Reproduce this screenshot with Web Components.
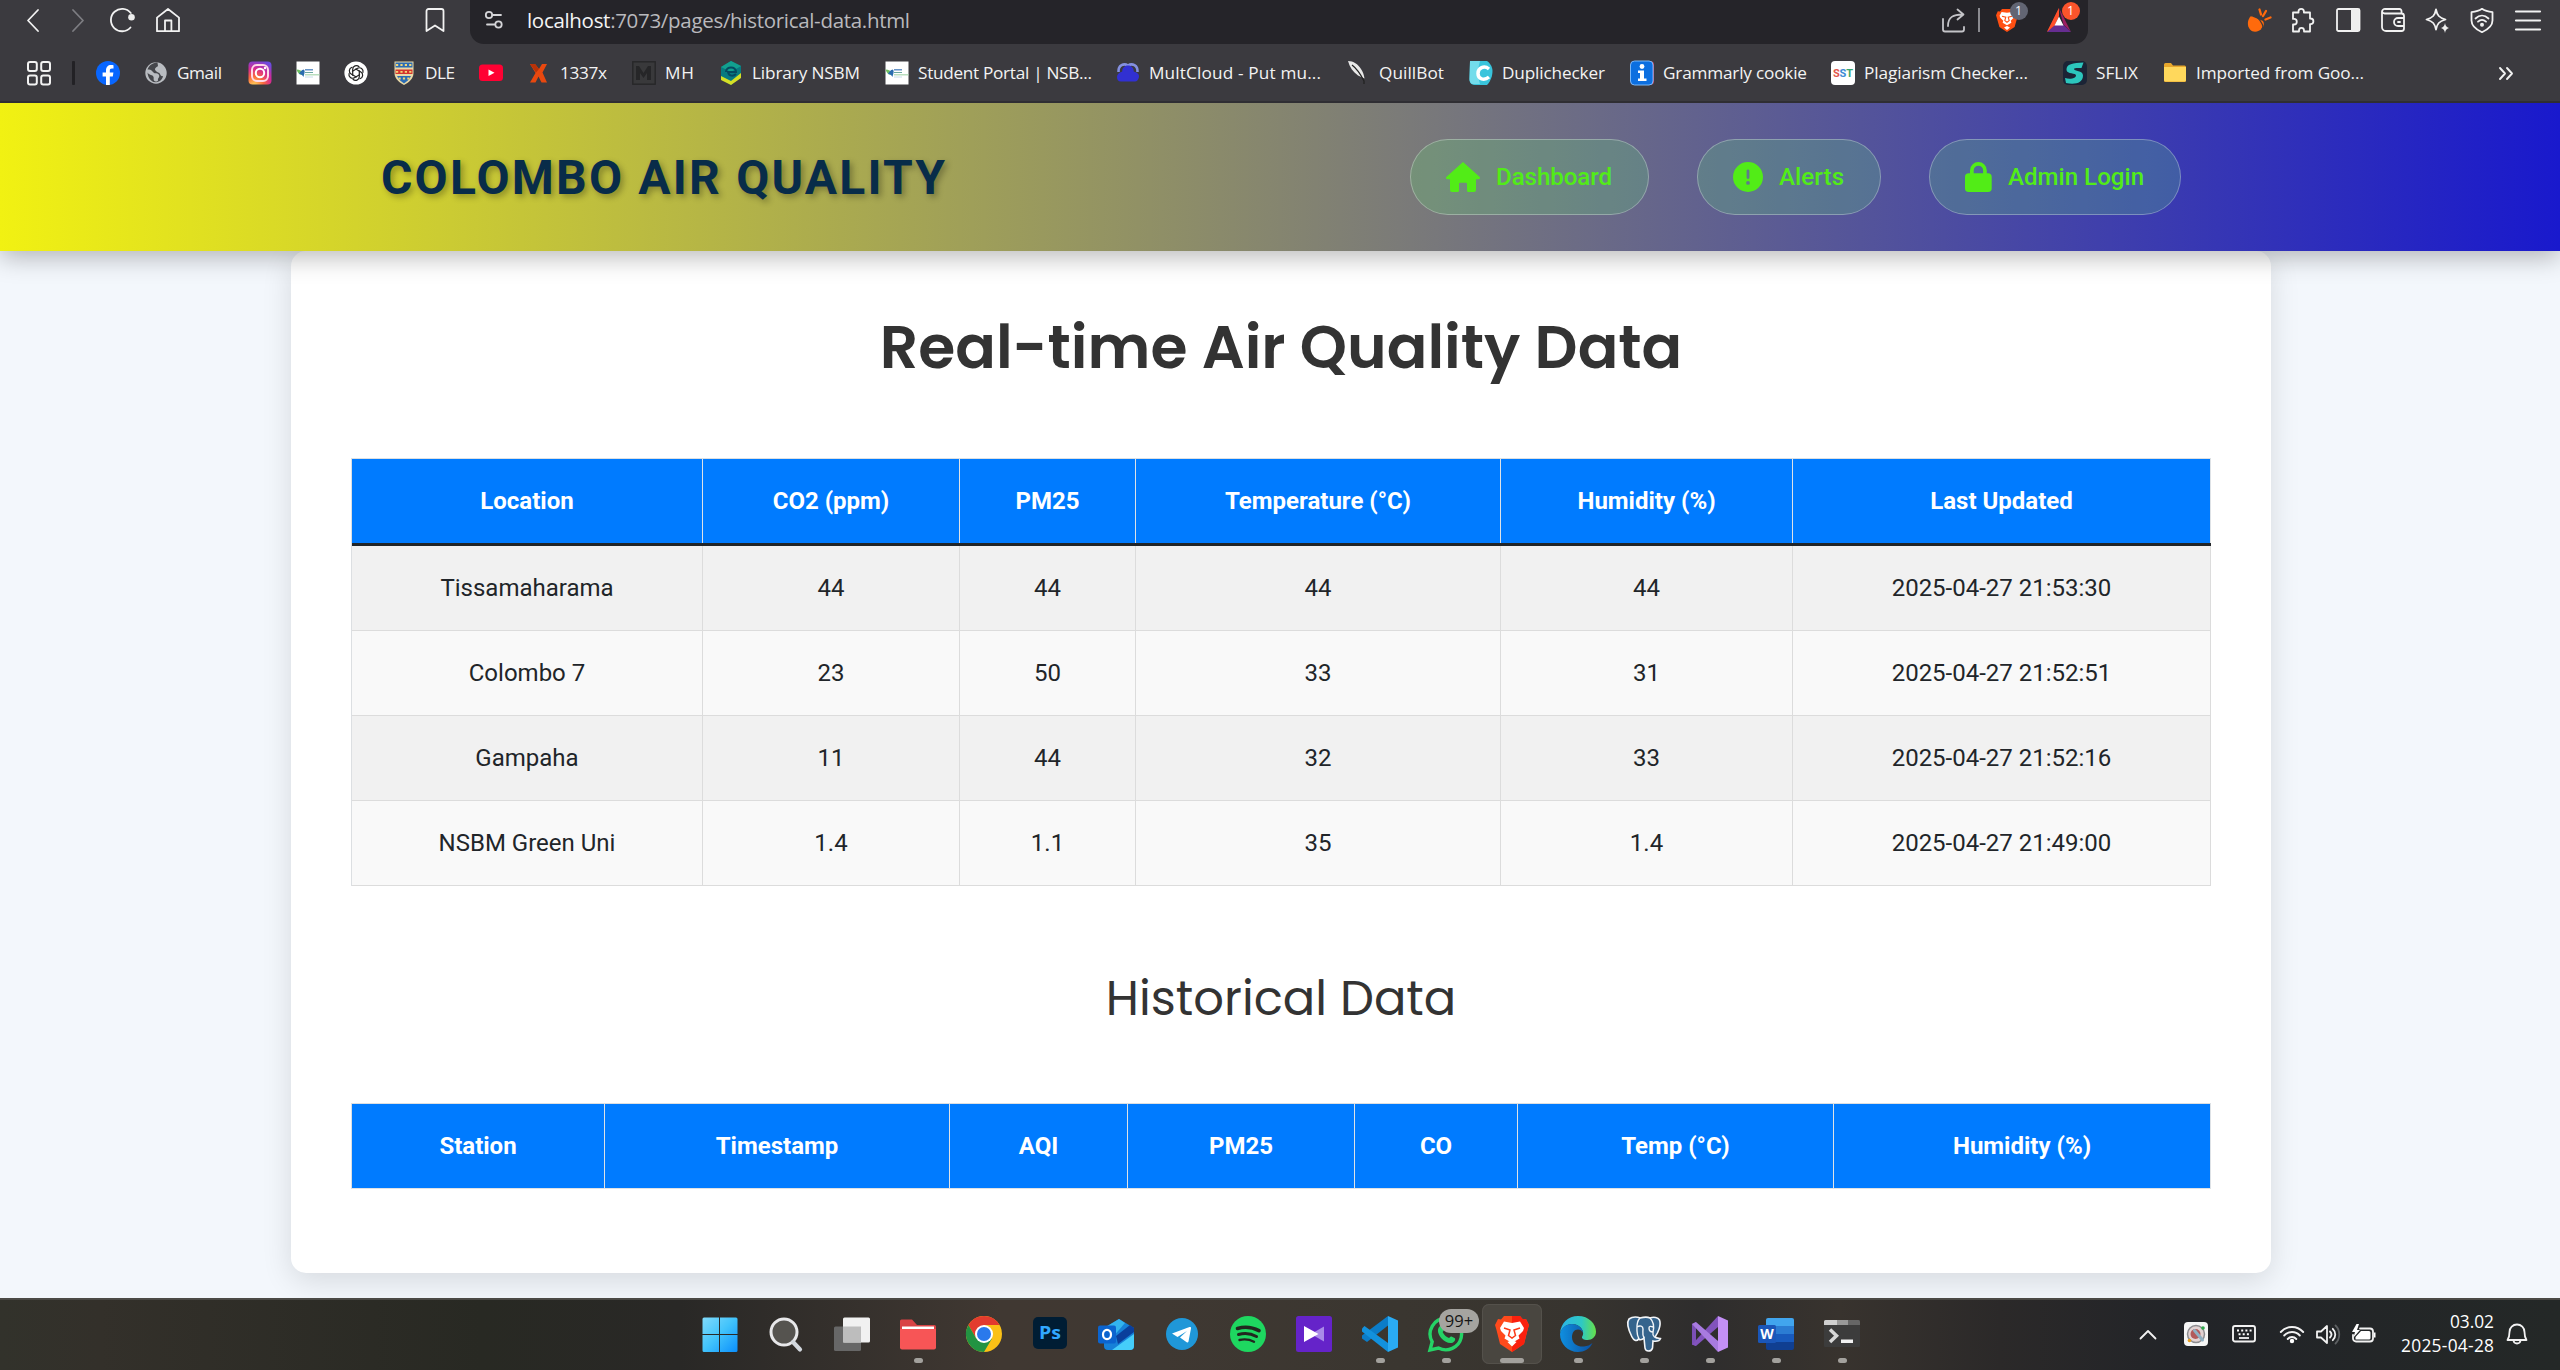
<!DOCTYPE html>
<html lang="en">
<head>
<meta charset="utf-8">
<title>Colombo Air Quality</title>
<style>
html,body{margin:0;height:100%}
body{width:2560px;height:1370px;overflow:hidden;background:#f4f7fc;font-family:Roboto,"Liberation Sans",sans-serif;color:#212529}
</style>
</head>
<body>
<desktop-screen></desktop-screen>
<script>
const petal = 'M8.700 14.200V8.300a3.700 3.700 0 0 1 6.300-2.600';
const ICONS = {
/* browser toolbar */
back:`<path d="M17 2 7 12.5 17 23" class="l"/>`,
forward:`<path d="M7 2 17 12.5 7 23" class="l" style="stroke:#7d7d82"/>`,
reload:`<path d="M20.500 19.500A11.200 11.200 0 1 1 20.800 5" class="l"/><circle cx="21.500" cy="9.300" r="3.300" fill="#eee"/>`,
home:`<path d="M1 23.2V9.6L12 1l11 8.600V23.200zM9 23V12.500h6.400V23" class="l"/>`,
bookmark:`<path d="M3.500 23V3A2 2 0 0 1 5.500 1h13A2 2 0 0 1 20.500 3V23L12 17.500z" class="l"/>`,
tune:`<g class="l" style="stroke:#d5d5d8"><circle cx="7" cy="7" r="3.200"/><path d="M10.500 7H19M5 16.500h7.500"/><circle cx="16.500" cy="16.500" r="3.200"/></g>`,
share:`<path d="M1 11v10.500a2 2 0 0 0 2 2h17a2 2 0 0 0 2-2V19M6 18C6 9 11 6.500 21 6.500M15.500 1.500l6 5-6 5" class="l" style="stroke:#c4c4c8"/>`,
brave:`<path d="M7 1h10l2 2.500 2.200-.3 1.800 4-1 3.300-2.400 8.500L12 24l-7.600-5L2 10.500 1 7.200l1.800-4 2.200.3z" fill="#ff4f12"/><path d="M12 4.800 17.400 4l2 3.800-.7 2-3 2.900.7 2L12 17.300l-4.400-2.600.7-2-3-2.900-.7-2L6.600 4zM12 18l3 1.500-3 2.500-3-2.500z" fill="#fff"/><path d="M7 8.200l3.800 1-1 3.400 2.200 1.600 2.200-1.600-1-3.400 3.800-1" fill="none" stroke="#ff4f12" stroke-width="1.100"/>`,
bat:`<path d="M12 0 0 24 7.500 16z" fill="#f1452b"/><path d="M12 0l4.500 16.500L24 24z" fill="#9e1f63"/><path d="M0 24 8 16.500h8L24 24z" fill="#662d91"/><path d="M12 0 0 24 8 17l4-9z" fill="#ff4f2a"/><path d="M12 8.500 7.500 17.500h9z" fill="#fff"/>`,
orange:`<path d="M4 8C0 12 0 18 3 21.500S12 24 15 20.500c2-2.500 2.500-5.500 1-7.500z" fill="#ff6a0c"/><path d="M4 8C6 6 10 8 13 12.500s4 7 1.500 8.500" fill="none" stroke="#3b3a3f" stroke-width="1.300"/><path d="M12.500 1.500l1.500 5M19 3l-3 5M23.500 9.500l-5 2" stroke="#ff6a0c" stroke-width="2.300" stroke-linecap="round"/>`,
puzzle:`<path d="M3 4.500h5.500V3.600a2.700 2.700 0 0 1 5.400 0v.9H20v6h.6a2.800 2.800 0 0 1 0 5.600H20V23.500h-6v-1.100a2.500 2.500 0 0 0-5 0v1.100H3V16.500h1a2.800 2.800 0 0 0 0-5.600H3z" class="l"/>`,
panel:`<rect x="1" y="1" width="22.500" height="22" rx="1.500" class="l"/><path d="M15 1h8v22h-8z" fill="#eee"/>`,
wallet:`<path d="M20.500 5.500V3a2 2 0 0 0-2-2H4.500A3 3 0 0 0 1 4v15a4 4 0 0 0 4 4h15.500a2.500 2.500 0 0 0 2.500-2.500V8a2.500 2.500 0 0 0-2.500-2.500H4A3 3 0 0 1 1 3.500M23 10h-6a4 4 0 0 0-4 4v0a4 4 0 0 0 4 4h6M17 14h2" class="l"/>`,
spark:`<path d="M11 1.500c1.200 6 3 8 9.500 10-6.500 2-8.300 4-9.500 10-1.200-6-3-8-9.500-10C8 9.500 9.800 7.500 11 1.500z" class="l"/><path d="M20 15c.6 3 1.400 4 4 5-2.600 1-3.400 2-4 5-.6-3-1.400-4-4-5 2.600-1 3.400-2 4-5z" fill="#eee"/>`,
vpn:`<path d="M12 .8c3 2.200 6.500 3 10.500 3.400v8.300c0 5-4.500 9-10.500 11.700C6 21.500 1.500 17.500 1.500 12.500V4.200C5.500 3.800 9 3 12 .8zM5.500 10.500c4-3.800 9-3.800 13 0M8 13.700c2.500-2.300 5.500-2.300 8 0" class="l"/><circle cx="12" cy="16.800" r="2" fill="#eee"/>`,
menu:`<path d="M0 3.500h24M0 12.500h24M0 21.500h24" class="l" style="stroke-width:2.200"/>`,
/* bookmarks */
apps:`<g class="l" style="stroke-width:2"><rect x="1" y="1" width="8.800" height="9" rx="2"/><rect x="14.200" y="1" width="8.800" height="9" rx="2"/><rect x="1" y="14.500" width="8.800" height="9" rx="2"/><rect x="14.200" y="14.500" width="8.800" height="9" rx="2"/></g>`,
facebook:`<circle cx="12" cy="12" r="12" fill="#0866ff"/><path d="M10 24V15.500H6.600V11.500H10V9.500C10 6 12 4 15 4c1.200 0 2.200.1 2.500.2v3.400H16c-1.700 0-2.200.9-2.200 2.200v1.700h3.600l-.6 4h-3V24z" fill="#fff"/>`,
globe:`<circle cx="12" cy="12" r="10.700" fill="#b9bcc1"/><path d="M13.500 1.500c-4 0-8 2-10 7 2 0 3.500 0 5.500 2.500s5 .5 6 3-1.500 3-1 5c.3 1.800-3 2-4 .5s.5-3-1-4.500-4-1-5.500-3.500C4 17 7 20 9.500 21l2.500.3c4-.5 6.500-3 7-6.300-1.500.5-2.500-.5-3-2s-3-1.500-4.500-3.500 1-3.500 2-4 0-2.500 0-4z" fill="#45464b"/>`,
instagram:`<defs><radialGradient id="ig" cx=".25" cy="1.050" r="1.150"><stop offset="0" stop-color="#ffd95c"/><stop offset=".35" stop-color="#fb6a3c"/><stop offset=".65" stop-color="#d62a92"/><stop offset="1" stop-color="#6a4be0"/></radialGradient></defs><rect x=".5" y=".5" width="23" height="23" rx="4" fill="url(#ig)"/><rect x="4" y="4" width="16" height="16" rx="5" fill="none" stroke="#ffd9e6" stroke-width="2"/><circle cx="12" cy="12" r="4.200" fill="none" stroke="#fff" stroke-width="2"/><circle cx="17" cy="7" r="1.200" fill="#fff"/>`,
nsbm:`<path d="M.5.5h23v23H.5z" fill="#fff"/><path d="M.5 8.500c3 0 5.500 1 7.500 4.500-3 2-6 0-7.500-4.500z" fill="#6fc062"/><path d="M3 13c2 0 3.500 1 4.500 3 1-4 2-6.500 0-7.500-2.500 1-3.500 2.500-4.500 4.500z" fill="#2a6cae"/><path d="M9 8.800h8" stroke="#4d82bf" stroke-width="1.300"/><path d="M9 11.500h8" stroke="#6aa8a0" stroke-width="1"/><path d="M9 13.800h14.500" stroke="#a9d6ae" stroke-width="1.200"/><path d="M9 16h8" stroke="#c8dbe8" stroke-width="1"/>`,
chatgpt:`<circle cx="12" cy="12" r="11.600" fill="#fff"/><g fill="none" stroke="#222" stroke-width="1.200" stroke-linecap="round">${[0,60,120,180,240,300].map(a => `<path d="${petal}" transform="rotate(${a} 12 12)"/>`).join('')}</g>`,
crest:`<path d="M2.500.5h19V12c0 6-5 9.500-9.500 12C7.500 21.500 2.500 18 2.500 12z" fill="#e9d9a8"/><path d="M3.500 1.500h17v5h-17z" fill="#2b6cb4"/><path d="M3.500 8.500h17V13h-17z" fill="#d4342d"/><path d="M5 15h14c-1.500 3.500-4.500 5.800-7 7.500-2.500-1.700-5.500-4-7-7.500z" fill="#2b6cb4"/><path d="M4 4h16M4 10.800h16M6.500 17.500h11" stroke="#f2d675" stroke-width="1.800" stroke-dasharray="2.200 2.200"/>`,
youtube:`<rect y="3.500" width="24" height="16.500" rx="3.500" fill="#ff0133"/><path d="M9.500 8.500v6.500l6-3.200z" fill="#fff"/>`,
x1337:`<path d="M3 3h5l4 5 3-5h5l-4.500 8.500L20 21.500h-5.500l-3-6-3 6H3l5.500-9.500z" fill="#e8480f"/><path d="M3 3h5l4 5-3 3.500z" fill="#b83208"/>`,
mh:`<rect x=".8" y=".8" width="22.400" height="22.400" fill="#39393b" stroke="#272729" stroke-width="1.400"/><path d="M4 19V5h3l4.500 7L16 5h3v14h-4v-7l-3.500 5L8 12v7z" fill="#262628"/>`,
library:`<path d="M12 0l10 5v10L12 24 2 18V6z" fill="#087a80"/><path d="M2 15l10 5 10-8v5L12 24 2 19z" fill="#d5df26"/><path d="M12 0l10 5-10 6L2 6z" fill="#12a08f"/><path d="M7 11c0-6 10-6 10 0H9c1 5 6 4 8 2" fill="none" stroke="#064a60" stroke-width="2"/>`,
multcloud:`<path d="M2.500 11C2 4 8 2 12 4.500 16 2 22 4 21.500 11" fill="none" stroke="#8490e0" stroke-width="2.600"/><path d="M12 4.500c3.500 0 5.800 2.500 5.800 6 4 1 5.700 3 5.200 5.500s-2 4.500-4 4.500H5c-3 0-4-2-4-4.500 0-2.500 1.700-4.500 5.200-5.500 0-3.500 2.300-6 5.800-6z" fill="#3130d2"/>`,
quill:`<path d="M2 0c5.500 0 10 3 13 8 2 3 3 6 3.500 9.500L12 14.500C7 11 3.500 6 2 0z" fill="#e8e8e8"/><path d="M6 4c4 3 8 8 12 16v3" fill="none" stroke="#222" stroke-width="1.300"/>`,
dupli:`<path d="M1 0h17c3 2 5.500 6 5.500 10S22 20 18 24H6C2 24 .5 21 .5 18z" fill="#39c4dc"/><path d="M1 0h10L8 12l3 11H6C2 24 .5 21 .5 18z" fill="#73dceb"/><path d="M20 8c-5-4-11-1-11 4.500S15 20 20 16" fill="none" stroke="#fff" stroke-width="3.500"/>`,
info:`<rect x=".5" width="23.500" height="24" rx="4" fill="#d7506b"/><rect x=".5" width="22.500" height="24" rx="4" fill="#0c6fe0" stroke="#79b7f7"/><circle cx="12" cy="5.500" r="2.400" fill="#fff"/><path d="M8 9.500h6v8h2.500V20H8v-2.500h2V12H8z" fill="#fff"/>`,
sst:`<rect width="24" height="24" rx="4" fill="#fff"/><text x="2" y="16" font-size="11" font-weight="700" font-family="Roboto,sans-serif" textLength="20" fill="#e2574c">S<tspan fill="#3d8bd4">S</tspan><tspan fill="#3aa76d">T</tspan></text>`,
sflix:`<rect width="24" height="24" rx="5" fill="#1b2436"/><path d="M20.500 1.500C10 2 3 3 3.500 9c.5 4.500 9.500 2.500 9.500 5.500s-6 4-11 2.500l1 5c9 2 17 0 17-7.500 0-5.500-9-4-9-6.500 0-1.500 5-1 7.500-1z" fill="#2cc6bd"/>`,
folder:`<path d="M1 3.500A1.500 1.500 0 0 1 2.500 2H8l2 2.500h11.500A1.500 1.500 0 0 1 23 6v13.500a1.500 1.500 0 0 1-1.500 1.500h-19A1.500 1.500 0 0 1 1 19.500z" fill="#e8a72c"/><path d="M1 6h22v13a1.500 1.500 0 0 1-1.500 1.500h-19A1.500 1.500 0 0 1 1 19z" fill="#ffd85c"/>`,
more:`<path d="M4 7l5 5.500-5 5.500M11 7l5 5.500-5 5.500" class="l" style="stroke-width:1.900"/>`,
/* navigation pills, 30px tall */
house:`<path d="M17 0 0 15.200c-.3 1.300.5 2 1.500 2H4V28a2 2 0 0 0 2 2h5.500a1.500 1.500 0 0 0 1.500-1.500V22a1.200 1.200 0 0 1 1.200-1.200h5.600A1.200 1.200 0 0 1 21 22v6.500a1.500 1.500 0 0 0 1.500 1.500H28a2 2 0 0 0 2-2V17.200h2.500c1 0 1.800-.7 1.500-2z" fill="#52ec17"/>`,
alert:`<path d="M15 0a15 15 0 1 0 0 30 15 15 0 0 0 0-30zm0 7.500c.8 0 1.400.6 1.400 1.400v6.600a1.400 1.400 0 0 1-2.800 0V8.900c0-.8.600-1.400 1.400-1.400zm0 11.500a1.900 1.900 0 1 1 0 3.800 1.900 1.900 0 0 1 0-3.800z" fill="#52ec17"/>`,
lock:`<path d="M5 11.200V8.400a8.400 8.400 0 0 1 16.800 0v2.800H23a3.700 3.700 0 0 1 3.700 3.700v11.300A3.700 3.700 0 0 1 23 30H3.700A3.700 3.700 0 0 1 0 26.200V14.900a3.700 3.700 0 0 1 3.700-3.700zm3.700 0h9.400V8.400a4.700 4.700 0 0 0-9.400 0z" fill="#52ec17"/>`,
/* taskbar, 36 grid */
windows:`<defs><linearGradient id="w" x1="0" y1="0" x2="36" y2="36" gradientUnits="userSpaceOnUse"><stop offset="0" stop-color="#84dcfb"/><stop offset=".5" stop-color="#41c3fb"/><stop offset="1" stop-color="#0a8efc"/></linearGradient></defs><path d="M.5 3A1.500 1.500 0 0 1 2 1.500h15V18H.500zM18 1.500h16A1.500 1.500 0 0 1 35.500 3v15H18zM.500 19H17v17H2A1.500 1.500 0 0 1 .500 34.500zM18 19h17.500v15.500A1.500 1.500 0 0 1 34 36H18z" fill="url(#w)"/>`,
search:`<circle cx="16" cy="16" r="13" fill="#55534f" stroke="#e8e8ea" stroke-width="3"/><path d="M25 26l7 7.500" stroke="#d3d8de" stroke-width="4.200" stroke-linecap="round"/>`,
taskview:`<rect x="0" y="10.500" width="27" height="24.500" rx="1.500" fill="#676767"/><rect x="9" y="1.500" width="27" height="25" rx="1.500" fill="#f1f1f1"/><path d="M9 10.500h18v16H9z" fill="#bdbdbd"/>`,
explorer:`<path d="M0 5a1.500 1.500 0 0 1 1.500-1.500H12L17 9h17.500A1.500 1.500 0 0 1 36 10.500V20H0z" fill="#d94345"/><path d="M2 10.500h32v6H2z" fill="#fff"/><path d="M0 13h36v18.500a2 2 0 0 1-2 2H2a2 2 0 0 1-2-2z" fill="#f75556"/>`,
chrome:`<circle cx="18" cy="18" r="18" fill="#fbc116"/><path d="M18 9h15.600A18 18 0 0 0 2.400 9L10 22z" fill="#e33b2e"/><path d="M2.400 9a18 18 0 0 0 15.600 27l8-13.500-8 3.500-8-4z" fill="#229342"/><circle cx="18" cy="18" r="9" fill="#fff"/><circle cx="18" cy="18" r="7" fill="#2a79ec"/>`,
photoshop:`<rect x="1" y="1" width="34" height="32" rx="5" fill="#001d34"/><text x="18" y="23" text-anchor="middle" font-size="18.500" font-weight="700" font-family="Open Sans,sans-serif" textLength="22" lengthAdjust="spacingAndGlyphs" fill="#31a8ff">Ps</text>`,
outlook:`<path d="M6 12 21 3l15 9v18a4 4 0 0 1-4 4H10a4 4 0 0 1-4-4z" fill="#1681d8"/><path d="M6 12 21 3l6 4L14 22z" fill="#33b4ee"/><path d="M18 20 32 9l4 3v4L20 28z" fill="#0a3f9c"/><path d="M14 34l22-16v12a4 4 0 0 1-4 4z" fill="#45cdfa"/><rect y="9.500" width="18" height="18" rx="2" fill="#0b64cf"/><ellipse cx="9" cy="18.500" rx="4" ry="4.700" fill="none" stroke="#fff" stroke-width="2.200"/>`,
telegram:`<circle cx="18" cy="18" r="16" fill="#1f97d8"/><path d="M8 17.500 25.500 11c1.200-.3 1.700.2 1.500 1.500l-2.500 13c-.3 1-1 1.200-1.800.7L16 21.500 23 15l-9.500 6z" fill="#fff"/>`,
spotify:`<circle cx="18" cy="18" r="18" fill="#1ed760"/><g fill="none" stroke="#22271f" stroke-linecap="round"><path d="M7.500 12.500c7-2 15-1.200 21.500 2.200" stroke-width="3.600"/><path d="M8.500 18.500c6-1.600 12.500-1 18 2" stroke-width="3"/><path d="M9.500 24c5-1.200 10-.6 14.500 1.700" stroke-width="2.400"/></g>`,
visualplayer:`<rect width="36" height="36" rx="2.500" fill="#6523c9"/><path d="M28 10.500v15L15 18z" fill="#a98ae8"/><path d="M8 10l14.500 8L8 26z" fill="#fff"/>`,
vscode:`<path d="M26 0v9.500L5 26 0 22.500v-3z" fill="#0b7cc8"/><path d="M2.500 10 26 27v9L0 15.500v-3z" fill="#1291dd"/><path d="M26 0l10 4.500v27L26 36z" fill="#2aabf3"/>`,
whatsapp:`<path d="M18 2.200A15.800 15.800 0 1 1 10.500 32L2 34l2.200-8.200A15.800 15.800 0 0 1 18 2.200z" fill="none" stroke="#25d366" stroke-width="3.400"/><path d="M12 10c1-.8 2.500-.5 3 .8l1 2.800c.2 1-.8 1.800-1.400 2.500 1.500 3 3.400 4.800 6.400 6 .8-.8 1.400-2 2.500-1.600l3 1.400c1 .6.8 2 .1 3-3.500 4.500-9.500 1-12.500-2s-6.500-9-2.100-12.900z" fill="#25d366"/>`,
bravebig:`<path d="M10 0h16l3 3.500L32 3l3 6-1.500 5L30 28l-12 8L6 28 2.500 14 1 9l3-6 3 .5z" fill="#ff4a1c"/><path d="M18 0h8l3 3.500L32 3l3 6-1.500 5L30 28l-12 8z" fill="#fa200e"/><path d="M18 7l8-1.500 4 6.500-1 3-4.500 4.500 1 3L18 27l-7.500-4.500 1-3L7 15l-1-3 4-6.500zM18 24l4.500 2L18 30.500 13.500 26z" fill="#fff"/><path d="M10 12l6 2-1.500 5.500L18 22l3.500-2.500L20 14l6-2" fill="none" stroke="#fb3a18" stroke-width="1.500"/>`,
edge:`<defs><linearGradient id="e1" x1="0" x2="1"><stop offset="0" stop-color="#2bb4e8"/><stop offset=".6" stop-color="#2ec8c4"/><stop offset="1" stop-color="#66e04a"/></linearGradient><linearGradient id="e2" x1="0" x2="1"><stop offset="0" stop-color="#0f8fe0"/><stop offset="1" stop-color="#0c4fa0"/></linearGradient></defs><path d="M0 17C1 7 8 0 18 0c11 0 18 8 18 15.500C36 21 32 24 27.500 24c-4 0-6-1.500-5.500-3s1.500-2 1-5C22 11 17 8 12 8 6 8 2 12 0 17z" fill="url(#e1)"/><path d="M0 18C1 12 6 8 12 8c6 0 11 4 11 9-1-2.500-3-3.500-5-3.500-4 0-6 3.500-6 7.500 0 7 6 10 12 9.500 3.500-.3 6-1.500 8.500-3.500C30 33 24 36 18 36 8 36 0 28 0 18z" fill="url(#e2)"/>`,
postgres:`<path d="M3 3c4-3 9-2 11-1 4-1 8-1 10 0 4-1.500 8-.5 9.500 2 2 5-1.500 13-4.500 17 2 1.500 4 1 5.500 1.500-1 2.500-4.500 3-7.500 2.500l-.5 7c-1 4-7 4-7.500 0L18 22c-2 2-4 2-5.500 1-2 3-5 1-6.500-2C2.500 14 0 7 3 3z" fill="#35648d" stroke="#f2f5f8" stroke-width="1.600"/><path d="M14 2c-4 4-3 9-3 13 0 3 1 6 2 8M24 2c5 5 4 10 3 14-.5 2 0 3.500 1.500 5M11 11c3-2 6-1 6 2s-1 5 1 9M27 11c-2-1-4-1-4 1s1 4 4 4" fill="none" stroke="#f2f5f8" stroke-width="1.400"/>`,
visualstudio:`<path d="M0 8l4-2v24l-4-1.500z" fill="#7b4fb5"/><path d="M0 28.500l4 1.500L26 11V0z" fill="#8253bd"/><path d="M0 8l4-2 22 19v11z" fill="#a87be0"/><path d="M26 0l10 4.500v27L26 36z" fill="#c490f5"/>`,
word:`<path d="M8 4a2 2 0 0 1 2-2h24a2 2 0 0 1 2 2v6H8z" fill="#41a5ee"/><path d="M8 10h28v8H8z" fill="#2b7cd3"/><path d="M8 18h28v8H8z" fill="#185abd"/><path d="M8 26h28v6a2 2 0 0 1-2 2H10a2 2 0 0 1-2-2z" fill="#103f91"/><rect y="9" width="18" height="18" rx="1.500" fill="#1a56b8"/><text x="9" y="23" text-anchor="middle" font-size="14" font-weight="700" font-family="Open Sans,sans-serif" fill="#fff">W</text>`,
terminal:`<rect y="4" width="36" height="27" rx="1.500" fill="#3c3c3c"/><path d="M0 5.500A1.500 1.500 0 0 1 1.500 4H13v5H0z" fill="#cfcfcf"/><path d="M13 4h11v5H13z" fill="#999"/><path d="M24 4h10.500A1.500 1.500 0 0 1 36 5.500V9H24z" fill="#666"/><path d="M6 13.500l6.500 6.300L6 26" fill="none" stroke="#d8d8d8" stroke-width="3.500"/><path d="M17 23.500h12v3.500H17z" fill="#f2f2f2"/>`,
/* tray */
chevup:`<path d="M4.500 16.500 12 9l7.500 7.500" class="l"/>`,
trayapp:`<rect width="24" height="24" rx="4" fill="#f6f6f6"/><circle cx="12" cy="12" r="8.500" fill="#e3d3d3" stroke="#8d8d90" stroke-width="1.500"/><circle cx="11.500" cy="12" r="5" fill="#b25a5a"/><path d="M10.500 8.500l2.500 3 5.500 6.500" stroke="#8fb0c2" stroke-width="3" stroke-linecap="round"/><circle cx="19" cy="6" r="1.800" fill="#2ea84a"/><circle cx="5.500" cy="18.500" r="1.800" fill="#e8a020"/>`,
keyboard:`<rect x="1" y="4" width="22" height="15.500" rx="2" class="l" style="stroke-width:1.900"/><path d="M5 8.500h15M6.500 12.200h12" stroke="#fff" stroke-width="2" stroke-dasharray="2 2.200"/><path d="M7 16h10" stroke="#fff" stroke-width="1.700"/>`,
wifi:`<path d="M.8 10C7 3.300 17 3.300 23.200 10M4.200 13.500c4.300-4.600 11.300-4.600 15.600 0M7.700 17c2.400-2.600 6.200-2.600 8.600 0" class="l" style="stroke-width:1.900"/><circle cx="12" cy="19" r="2.200" fill="#fff"/>`,
volume:`<path d="M1 9.500h4L11 4v17l-6-5.500H1z" class="l"/><path d="M14 9.500c1.800 1.800 1.800 4.200 0 6M16.800 6.800c3.300 3.300 3.300 8.100 0 11.400" class="l"/><path d="M19.500 3.500c5 5 5 13 0 18" class="l" style="stroke:#5d6062"/>`,
battery:`<path d="M8 6.500h10a3 3 0 0 1 3 3v7a3 3 0 0 1-3 3H4a3 3 0 0 1-3-3V13" class="l" style="stroke-width:1.800"/><path d="M9 9h8a1.500 1.500 0 0 1 1.500 1.500V16a1.500 1.500 0 0 1-1.500 1.500H3.500V15zM22 10.500h1.500v5H22zM4.500 2 0 10h3L1.500 15.500 8 8H5l2-6z" fill="#fff"/>`,
bell:`<path d="M2.500 18c2-3 2-5 2-8a7.500 7.500 0 0 1 15 0c0 3 0 5 2 8zM8.500 18.500c.5 4 6.500 4 7 0" class="l"/>`
};

const define = (name, html, ready) => {
  const tpl = document.createElement('template');
  customElements.define(name, class extends HTMLElement {
    connectedCallback() {
      if (this.shadowRoot) return;
      const root = this.attachShadow({mode: 'open'});
      tpl.innerHTML = typeof html === 'function' ? html(this) : html;
      root.append(tpl.content.cloneNode(true));
      if (ready) ready(this, root);
    }
  });
};

/* SVG glyph; width/height in px, view box from the "grid" attribute */
define('ui-icon', el => {
  const w = el.getAttribute('w') || 24, h = el.getAttribute('h') || w, grid = el.getAttribute('grid') || '0 0 24 24';
  return `<style>:host{display:block;flex:none;width:${w}px;height:${h}px}svg{display:block;overflow:visible}.l,.l *{fill:none;stroke-linejoin:round;stroke-linecap:round}.l{stroke:#f2f2f2;stroke-width:1.8}</style><svg width="${w}" height="${h}" viewBox="${grid}">${ICONS[el.getAttribute('name')] || ''}</svg>`;
});

/* One line of text, tracked so that it spans its "w" attribute */
define('fit-text', el => `<style>:host{display:block;flex:none;width:${el.getAttribute('w')}px;white-space:nowrap}</style><span><slot></slot></span>`,
  (el, root) => {
    const span = root.querySelector('span'), n = el.textContent.trim().length;
    const natural = span.getBoundingClientRect().width;
    span.style.letterSpacing = ((+el.getAttribute('w') - natural) / Math.max(1, n - 1)).toFixed(3) + 'px';
  });

define('count-badge', el => `<style>:host{position:absolute;left:15px;top:-6px;width:18px;height:18px;border-radius:9px;background:${el.getAttribute('bg')};color:#fff;font:12.500px/18px "Open Sans",sans-serif;text-align:center}</style><slot></slot>`);

define('tool-bar', () => {
  const ic = (name, ml, w = 24) => `<ui-icon name="${name}" w="${w}" h="24" style="margin-left:${ml}px"></ui-icon>`;
  return `<style>
  :host{display:flex;height:44px;background:#3b3a3f}
  .side{display:flex;align-items:center;padding-bottom:4px;box-sizing:border-box;height:44px}
  .left{width:470px;flex:none}
  .omni{width:1618px;flex:none;background:#252429;border-radius:0 0 14px 14px;padding-left:12px}
  fit-text{font:20.500px/28px "Open Sans","Noto Sans",sans-serif;color:#b9b9bd;margin:0 0 0 21px}
  b{font-weight:400;color:#f4f4f5}
  .rule{width:1.500px;height:24px;background:#8b8b90;margin-left:12px}
  .wrap{position:relative}
  </style>
  <div class="side left">${ic('back',21)}${ic('forward',21)}${ic('reload',20)}${ic('home',22)}${ic('bookmark',243)}</div>
  <div class="side omni">${ic('tune',0)}<fit-text w="383"><b>localhost</b>:7073/pages/historical-data.html</fit-text>
  ${ic('share',1032)}<div class="rule"></div>
  <div class="wrap" style="margin-left:15px">${ic('brave',0)}<count-badge bg="#626573">1</count-badge></div>
  <div class="wrap" style="margin-left:28px">${ic('bat',0)}<count-badge bg="#fb542b">1</count-badge></div></div>
  <div class="side">${ic('orange',159)}${ic('puzzle',19)}${ic('panel',22)}${ic('wallet',21)}${ic('spark',20)}${ic('vpn',21)}${ic('menu',22)}</div>`;
});

define('book-mark', el => `<style>:host{display:flex;flex:none;align-items:center;gap:9px;height:24px}::slotted(fit-text){font:17.200px/24px "Open Sans","Noto Sans",sans-serif;color:#f3f3f3}</style><ui-icon name="${el.getAttribute('icon')}"></ui-icon><slot></slot>`);

define('bookmark-bar', () => {
  const items = [['facebook'],['globe','Gmail',45,2],['instagram'],['nsbm'],['chatgpt'],['crest','DLE',30],['youtube'],['x1337','1337x',47,1],['mh','MH',29,1],['library','Library NSBM',108,1],['nsbm','Student Portal | NSB...',174],['multcloud','MultCloud - Put mu...',172,1],['quill','QuillBot',65,1],['dupli','Duplichecker',103,1],['info','Grammarly cookie',144],['sst','Plagiarism Checker...',164,11],['sflix','SFLIX',42,1],['folder','Imported from Goo...',168]];
  return `<style>:host{display:flex;align-items:center;gap:24px;height:57px;box-sizing:border-box;padding:0 0 0 27px;background:#3b3a3f}.rule{width:3px;height:24px;border-radius:1px;background:#222125;margin:0 -3px}</style>
  <ui-icon name="apps"></ui-icon><div class="rule"></div>` + items.map(([i, t, w, pad]) =>
  `<book-mark icon="${i}"${pad ? ` style="margin-right:${pad}px"` : ''}>${t ? `<fit-text w="${w}">${t}</fit-text>` : ''}</book-mark>`).join('') +
  `<ui-icon name="more" style="margin-left:108px"></ui-icon>`;
});

define('nav-pill', el => `<style>:host{display:flex;align-items:center;box-sizing:border-box;width:${el.getAttribute('w')}px;height:76px;padding-left:35px;border:1px solid rgba(255,255,255,.3);border-radius:38px;background:rgba(98,238,122,.2)}
  ::slotted(fit-text){font:500 24px/36px Roboto,sans-serif;color:#52ec17}</style>
  <ui-icon name="${el.getAttribute('icon')}" w="${el.getAttribute('iw')}" h="30" grid="0 0 ${el.getAttribute('iw')} 30" style="margin-right:16px"></ui-icon><slot></slot>`);

define('site-header', `<style>
  :host{display:flex;align-items:center;justify-content:space-between;box-sizing:border-box;height:148px;padding:0 379px 0 381px;background:linear-gradient(90deg,#f1f112,#1919cd);box-shadow:0 6px 24px rgba(0,0,0,.28);position:relative;z-index:1}
  h1{margin:2px 0 0;font:700 48px/58px Roboto,sans-serif;color:#082c49;text-shadow:3px 3px 6px rgba(0,0,0,.3)}
  nav{display:flex;gap:48px}
  </style>
  <h1><fit-text w="564">COLOMBO AIR QUALITY</fit-text></h1>
  <nav><nav-pill w="239" icon="house" iw="34"><fit-text w="116">Dashboard</fit-text></nav-pill>
  <nav-pill w="184" icon="alert" iw="30"><fit-text w="65">Alerts</fit-text></nav-pill>
  <nav-pill w="252" icon="lock" iw="27"><fit-text w="136">Admin Login</fit-text></nav-pill></nav>`);

/* Grid table: columns, head and rows come from the element's attributes */
customElements.define('data-table', class extends HTMLElement {
  connectedCallback() {
    const cols = this.getAttribute('cols').split(' ').map(c => c + 'px').join(' ');
    const head = this.getAttribute('head').split('|');
    const rows = (this.getAttribute('rows') || '').split(';').filter(Boolean).map(r => r.split('|'));
    this.attachShadow({mode: 'open'}).innerHTML = `<style>
    :host{display:block;box-sizing:border-box;border:solid #dcdfe2;border-width:1px 0 0 1px;font:24px/36px Roboto,sans-serif;color:#212529;text-align:center}
    .row{display:grid;grid-template-columns:${cols}}
    .row>div{box-sizing:border-box;height:85px;padding-top:24px;border:solid #dcdcdc;border-width:0 1px 1px 0;background:#f9f9f9}
    .row.odd>div{background:#f1f1f1}
    .row.head>div{background:#007bff;color:#fff;font-weight:700;border-color:#dee2e6}
    .row.rule>div{height:87px;border-bottom:none}
    .row.rule{height:84px;overflow:hidden;border-bottom:3px solid #212529}
    </style><div class="row head ${rows.length ? 'rule' : ''}">${head.map(h => `<div>${h}</div>`).join('')}</div>` +
    rows.map((r, i) => `<div class="row ${i % 2 ? '' : 'odd'}">${r.map(c => `<div>${c}</div>`).join('')}</div>`).join('');
  }
});

define('data-card', `<style>
  :host{display:flex;flex-direction:column;align-items:center;box-sizing:border-box;width:1980px;height:1022px;margin:0 289px 0 291px;padding:54px 60px 0;background:#fff;border-radius:15px;box-shadow:0 8px 30px rgba(0,0,0,.12)}
  h2,h3{margin:0;color:#333;font-family:Poppins,Inter,sans-serif;white-space:nowrap}
  h2{font-weight:600;font-size:60px;line-height:84px}
  h3{font-weight:400;font-size:48px;line-height:70px}
  data-table{width:1860px}
  </style>
  <h2>Real-time Air Quality Data</h2>
  <data-table style="margin-top:69px" cols="351 257 176 365 292 418" head="Location|CO2 (ppm)|PM25|Temperature (°C)|Humidity (%)|Last Updated" rows="Tissamaharama|44|44|44|44|2025-04-27 21:53:30;Colombo 7|23|50|33|31|2025-04-27 21:52:51;Gampaha|11|44|32|33|2025-04-27 21:52:16;NSBM Green Uni|1.4|1.1|35|1.4|2025-04-27 21:49:00"></data-table>
  <h3 style="margin-top:78px">Historical Data</h3>
  <data-table style="margin-top:69px" cols="253 345 178 227 163 316 377" head="Station|Timestamp|AQI|PM25|CO|Temp (°C)|Humidity (%)"></data-table>`);

define('task-app', el => {
  const run = el.getAttribute('run');
  return `<style>:host{display:flex;flex-direction:column;align-items:center;flex:none;box-sizing:border-box;width:60px;height:60px;padding-top:12px;border-radius:7px;position:relative}
  :host([active]){background:#494640;box-shadow:inset 0 0 0 1px #54514b}
  i{width:${run}px;height:5px;margin-top:6px;border-radius:3px;background:#a3a19d}
  ::slotted(b){position:absolute;left:23px;top:5px;width:40px;height:24px;border-radius:12px;background:#a5a4a0;color:#161616;font:400 16.500px/24px "Open Sans",sans-serif;text-align:center}</style>
  <ui-icon name="${el.getAttribute('icon')}" w="36" grid="0 0 36 36"></ui-icon>${run ? '<i></i>' : ''}<slot></slot>`;
});

define('task-bar', () => {
  const apps = [['windows'],['search'],['taskview'],['explorer',9],['chrome'],['photoshop'],['outlook'],['telegram'],['spotify'],['visualplayer'],['vscode',9],['whatsapp',9,'<b>99+</b>'],['bravebig',24,'',1],['edge',9],['postgres',9],['visualstudio',9],['word',9],['terminal',9]];
  return `<style>
  :host{display:flex;justify-content:space-between;box-sizing:border-box;height:72px;border-top:2px solid #4b4a46;background:linear-gradient(90deg,#32322b 0,#33302a 100px,#282923 480px,#292826 680px,#403832 1000px,#3f3832 1160px,#3a3630 1400px,#37342f 1580px,#2e2d2d 1700px,#38332e 1840px,#2b2929 2000px,#222428 2180px,#242827 2560px)}
  .apps{display:flex;gap:6px;padding:4px 0 0 690px;flex:none}
  .tray{display:flex;align-items:flex-start;padding:22px 31px 0 0;gap:24px}
  .clock{font:17.300px/24px "Open Sans","Noto Sans",sans-serif;color:#fff;display:flex;flex-direction:column;align-items:flex-end;margin:-12px -1px 0 1px}
  </style><div class="apps">${apps.map(([n, r, b, a]) => `<task-app icon="${n}"${r ? ` run="${r}"` : ''}${a ? ' active' : ''}>${b || ''}</task-app>`).join('')}</div>
  <div class="tray"><ui-icon name="chevup"></ui-icon><ui-icon name="trayapp"></ui-icon><ui-icon name="keyboard"></ui-icon><ui-icon name="wifi"></ui-icon>
  <ui-icon name="volume" style="margin-left:-12px"></ui-icon><ui-icon name="battery" style="margin-left:-12px"></ui-icon>
  <div class="clock"><fit-text w="44">03.02</fit-text><fit-text w="93">2025-04-28</fit-text></div>
  <ui-icon name="bell" style="margin-left:-12px"></ui-icon></div>`;
});

define('desktop-screen', `<style>
  :host{display:flex;flex-direction:column;width:2560px;height:1370px;overflow:hidden}
  .edge{height:2px;background:#2f2e33}
  main{flex:1;min-height:0;overflow:hidden;background:#f3f7fc}
  </style>
  <tool-bar></tool-bar><bookmark-bar></bookmark-bar><div class="edge"></div>
  <main><site-header></site-header><data-card></data-card></main>
  <task-bar></task-bar>`);
</script>
</body>
</html>
